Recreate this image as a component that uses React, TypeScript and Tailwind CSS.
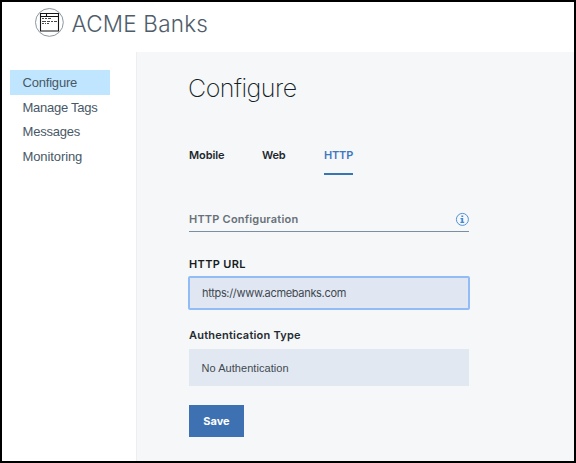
const navItems = [
  { label: 'Configure', style: 'h-[25px] bg-[#c0e6ff] tracking-[-0.2px]' },
  { label: 'Manage Tags', style: 'h-[25px] tracking-[-0.25px]' },
  { label: 'Messages', style: 'h-[24px] tracking-[-0.2px]' },
  { label: 'Monitoring', style: 'h-[25px] tracking-[-0.1px]' },
];

function WindowLogo() {
  return (
    <svg className="block h-[30px] w-[30px]" viewBox="0 0 30 30" fill="none">
      <circle cx="15.4" cy="15.4" r="13.9" stroke="#7d8b97" strokeWidth="0.9" />
      <path d="M6.5 6.5h18v17.5h-18z" stroke="#151515" strokeWidth="1.1" />
      <path d="M6.5 9.5h18M12.5 6.5v3" stroke="#151515" strokeWidth="1.1" />
      <path d="M8 11.5h2m1 0h2m1 0h3M8 14.5h4m1 0h3m1 0h2m1 0h3M8 16.5h2m1 0h1m1 0h2" stroke="#333" strokeWidth="0.9" />
    </svg>
  );
}

function InfoIcon() {
  return (
    <svg className="block h-[14px] w-[14px]" viewBox="0 0 14 14" fill="none">
      <circle cx="7.4" cy="7.4" r="6" stroke="#5292d8" strokeWidth="1" />
      <path d="M6.4 3.5h1.8v1.5H6.4zM5.5 6.1h2.7v3.7h1v1.1H5.4V9.8h1V7.2h-.9z" fill="#4288d2" />
    </svg>
  );
}

export default function App() {
  return (
    <div className="flex h-[463px] w-[576px] flex-col border-2 border-black bg-white font-['Inter','Liberation_Sans',sans-serif]">
      <header className="flex h-[50px] shrink-0 items-start pt-[5px] pl-[32px]">
        <WindowLogo />
        <span className="ml-[7.5px] mt-[2px] text-[22.5px] leading-[30px] font-light tracking-[0.2px] text-[#4f5d6b]">ACME Banks</span>
      </header>
      <div className="flex min-h-0 flex-1">
        <nav className="flex w-[134px] shrink-0 flex-col pt-[18px] pl-[8px]">
          {navItems.map((item) => (
            <a key={item.label} className={`flex w-[100px] items-center pl-[12.5px] font-['Liberation_Sans',sans-serif] text-[13px] text-[#485866] ${item.style}`}>
              {item.label}
            </a>
          ))}
        </nav>
        <main className="flex-1 border-l border-[#eceeef] bg-[#f5f7f9] pl-[52px] pr-[105px]">
          <h1 className="-ml-px pt-[20px] text-[25px] leading-[32px] font-extralight tracking-[-0.5px] text-[#141e26]">Configure</h1>
          <div className="mt-[41px] flex h-[30px] text-[11px] leading-[20px] font-semibold text-[#20262c]">
            <span className="w-[73px] tracking-[-0.1px]">Mobile</span>
            <span className="w-[62px] tracking-[-0.2px]">Web</span>
            <span className="h-[30px] w-[29px] border-b-2 border-[#3876b3] tracking-[-0.2px] text-[#4178be]">HTTP</span>
          </div>
          <div className="mt-[34px] flex h-[23px] items-start justify-between border-b border-[#7b8fa3]">
            <h2 className="text-[11px] leading-[20px] font-semibold tracking-[0.2px] text-[#687078]">HTTP Configuration</h2>
            <div className="pt-[3px]"><InfoIcon /></div>
          </div>
          <label className="mt-[22px] block h-[22px] text-[11px] leading-[20px] font-semibold tracking-[0.35px] text-[#171c21]">HTTP URL</label>
          <div className="-mx-px flex h-[34px] w-[282px] items-center rounded-[2px] border-2 border-[#92bcf6] bg-[#e0e7f2] pl-[12px] text-[11px] tracking-[-0.32px] text-[#414850]">https://www.acmebanks.com</div>
          <label className="mt-[15px] block h-[24px] text-[11px] leading-[20px] font-semibold tracking-[0.22px] text-[#252b32]">Authentication Type</label>
          <div className="flex h-[37px] items-center bg-[#e1e8f2] pt-px pl-[12.5px] font-['Liberation_Sans',sans-serif] text-[11px] tracking-[0.05px] text-[#414850]">No Authentication</div>
          <button className="mt-[19px] block h-[32px] w-[55px] bg-[#3e71b1] pt-px text-[11px] font-bold text-white">Save</button>
        </main>
      </div>
    </div>
  );
}
